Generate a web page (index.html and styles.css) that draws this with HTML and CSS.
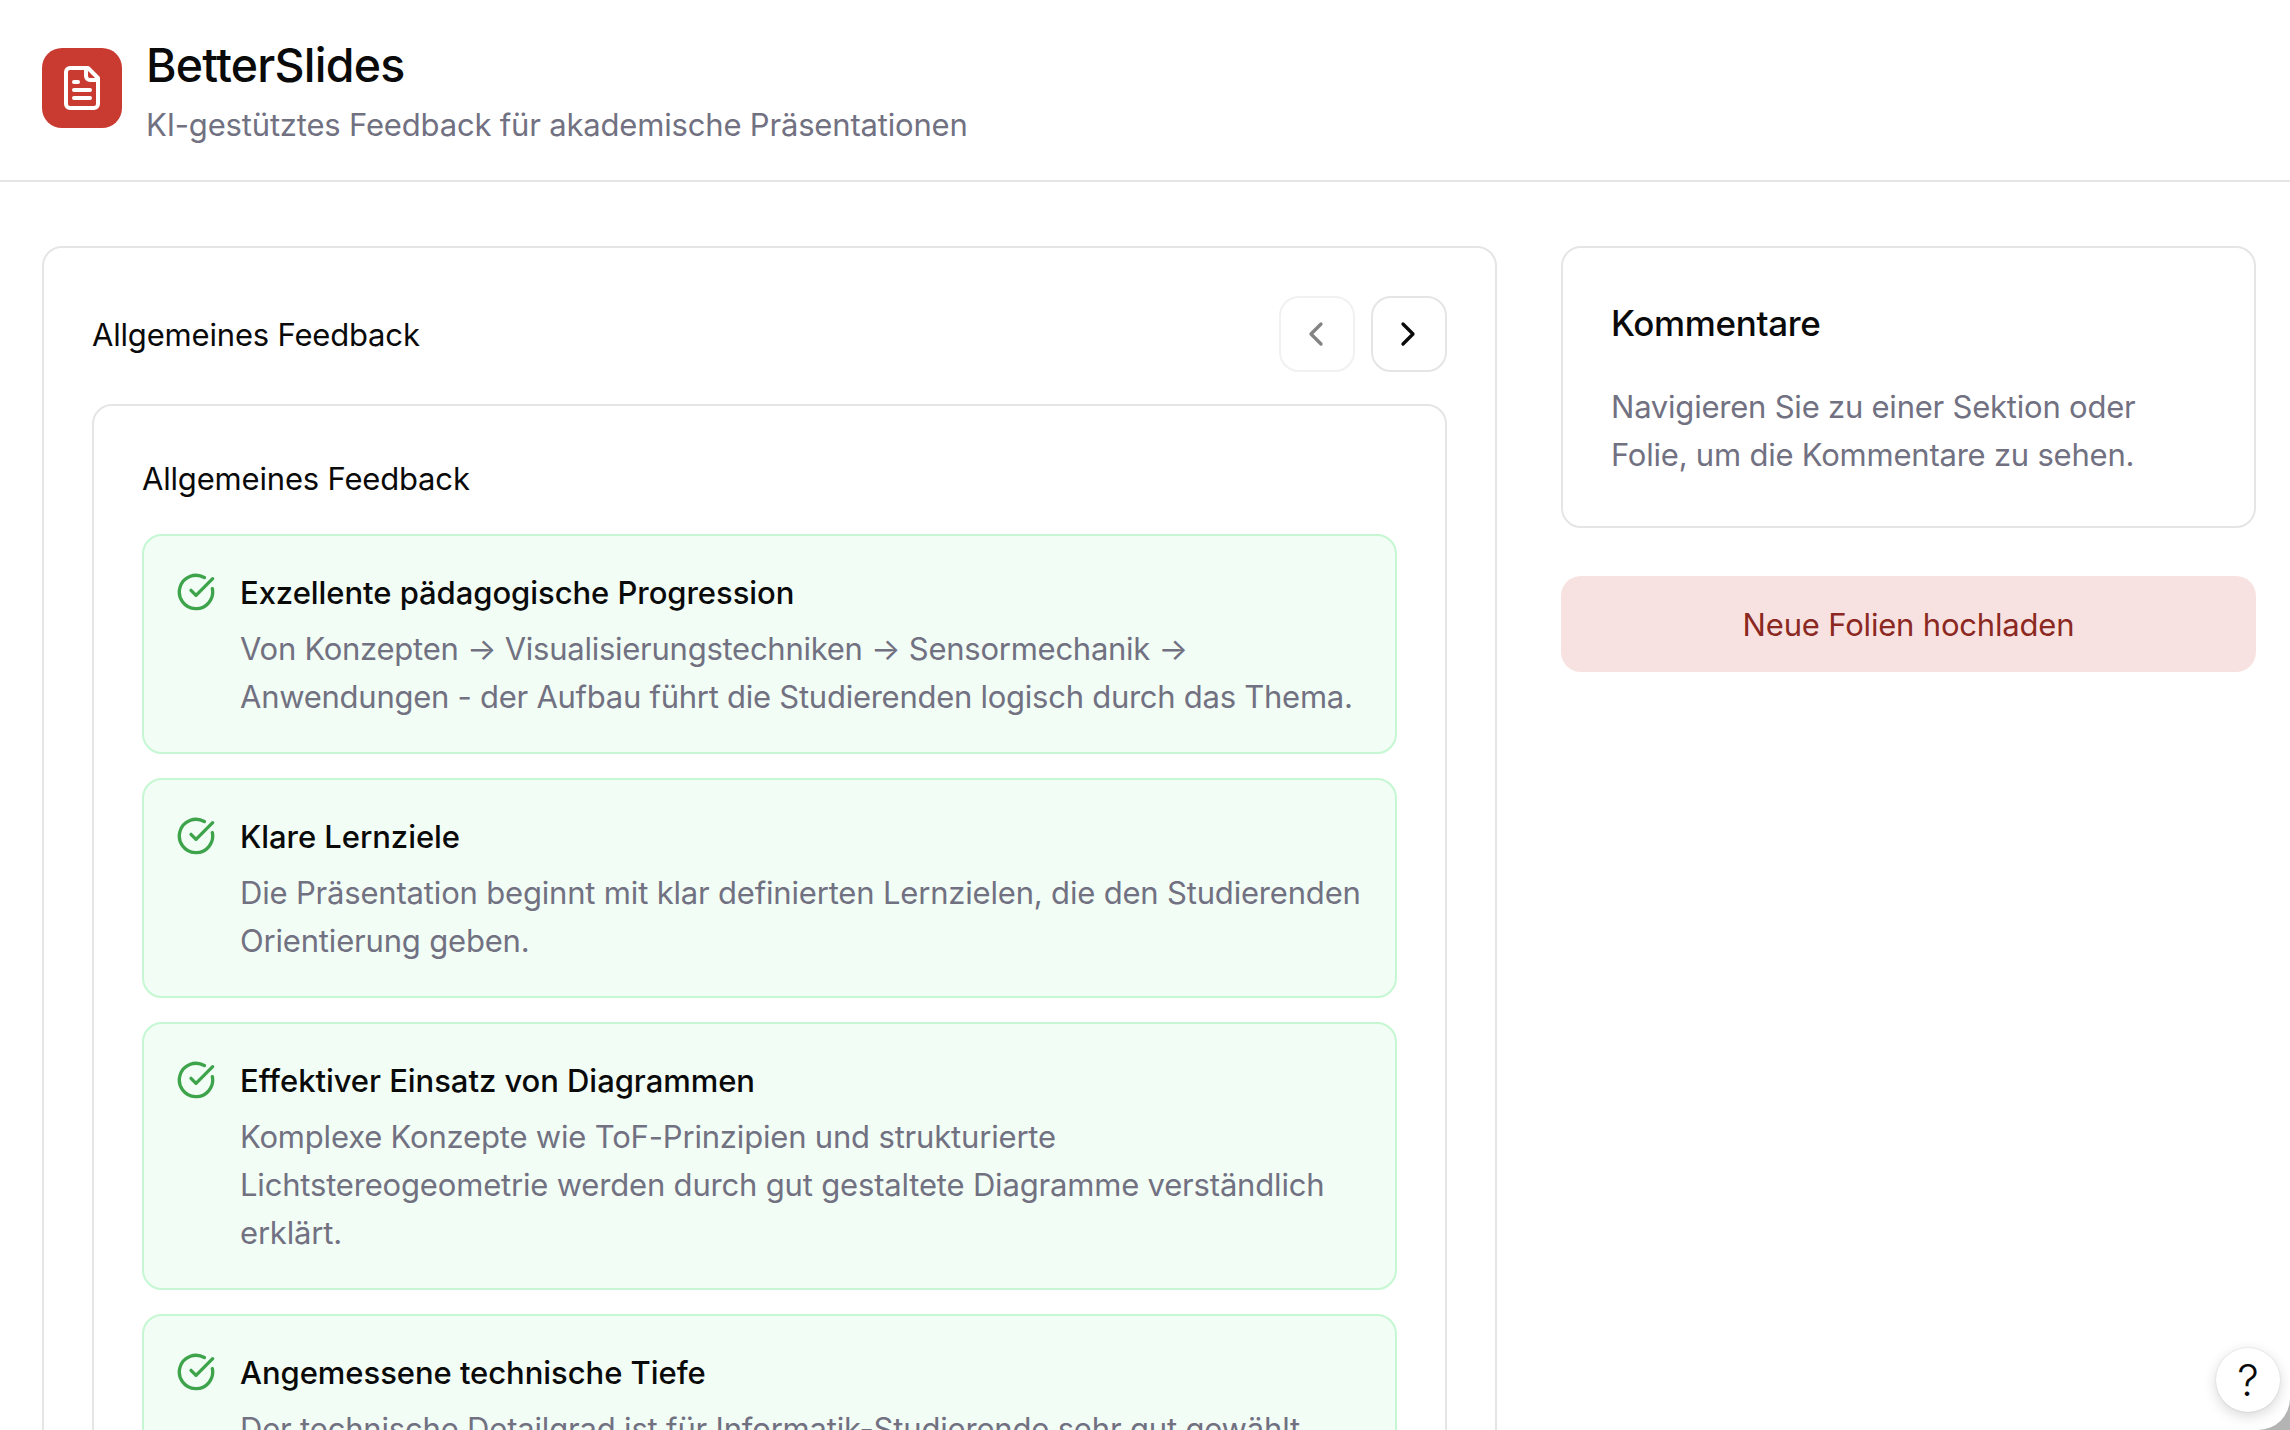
FILE: index.html
```
<!DOCTYPE html>
<html lang="de">
<head>
    <meta charset="UTF-8">
    <meta name="viewport" content="width=device-width, initial-scale=1.0">
    <title>BetterSlides</title>
    <link rel="stylesheet" href="styles.css">
</head>
<body>
    <div class="app">
        <header class="header">
            <div class="logo">
                <svg class="logo-icon" viewBox="0 0 24 24"><path d="M15 2H6a2 2 0 0 0-2 2v16a2 2 0 0 0 2 2h12a2 2 0 0 0 2-2V7Z"/><path d="M14 2v4a2 2 0 0 0 2 2h4"/><path d="M10 9H8"/><path d="M16 13H8"/><path d="M16 17H8"/></svg>
            </div>
            <div>
                <h1>BetterSlides</h1>
                <p class="subtitle">KI-gestütztes Feedback für akademische Präsentationen</p>
            </div>
        </header>

        <main class="main">
            <section class="card viewer">
                <div class="viewer-head">
                    <h2>Allgemeines Feedback</h2>
                    <div class="nav">
                        <button class="nav-btn" disabled><svg viewBox="0 0 24 24"><path d="m15 18-6-6 6-6"/></svg></button>
                        <button class="nav-btn"><svg viewBox="0 0 24 24"><path d="m9 18 6-6-6-6"/></svg></button>
                    </div>
                </div>

                <div class="card feedback">
                    <h2>Allgemeines Feedback</h2>
                    <div class="feedback-list">
                        <div class="item">
                            <svg class="check" viewBox="0 0 24 24"><path d="M21.801 10A10 10 0 1 1 17 3.335"/><path d="m9 11 3 3L22 4"/></svg>
                            <div>
                                <h3>Exzellente pädagogische Progression</h3>
                                <p class="tight">Von Konzepten → Visualisierungstechniken → Sensormechanik →<br>Anwendungen - der Aufbau führt die Studierenden logisch durch das Thema.</p>
                            </div>
                        </div>
                        <div class="item">
                            <svg class="check" viewBox="0 0 24 24"><path d="M21.801 10A10 10 0 1 1 17 3.335"/><path d="m9 11 3 3L22 4"/></svg>
                            <div>
                                <h3>Klare Lernziele</h3>
                                <p>Die Präsentation beginnt mit klar definierten Lernzielen, die den Studierenden<br>Orientierung geben.</p>
                            </div>
                        </div>
                        <div class="item">
                            <svg class="check" viewBox="0 0 24 24"><path d="M21.801 10A10 10 0 1 1 17 3.335"/><path d="m9 11 3 3L22 4"/></svg>
                            <div>
                                <h3>Effektiver Einsatz von Diagrammen</h3>
                                <p>Komplexe Konzepte wie ToF-Prinzipien und strukturierte<br>Lichtstereogeometrie werden durch gut gestaltete Diagramme verständlich<br>erklärt.</p>
                            </div>
                        </div>
                        <div class="item">
                            <svg class="check" viewBox="0 0 24 24"><path d="M21.801 10A10 10 0 1 1 17 3.335"/><path d="m9 11 3 3L22 4"/></svg>
                            <div>
                                <h3>Angemessene technische Tiefe</h3>
                                <p>Der technische Detailgrad ist für Informatik-Studierende sehr gut gewählt.</p>
                            </div>
                        </div>
                    </div>
                </div>
            </section>

            <aside class="sidebar">
                <div class="card comments">
                    <h2 class="comments-title">Kommentare</h2>
                    <p>Navigieren Sie zu einer Sektion oder<br>Folie, um die Kommentare zu sehen.</p>
                </div>
                <button class="upload">Neue Folien hochladen</button>
            </aside>
        </main>

        <button class="help">?</button>
    </div>
</body>
</html>
```
FILE: styles.css
```
* { box-sizing: border-box; margin: 0; padding: 0; }
html { background: #b4b4b4; }
body { font-family: Inter, "Liberation Sans", sans-serif; font-size: 31px; line-height: 48px; letter-spacing: -0.18px; color: #0a0a0a; overflow: hidden; }
h1, h2, h3 { font-size: 31px; line-height: 48px; font-weight: 400; }
h1, h2, h3, p { padding-top: 1px; margin-bottom: -1px; }
p { color: #717182; white-space: nowrap; }
button { font: inherit; letter-spacing: inherit; color: inherit; border: none; cursor: pointer; }
svg { fill: none; stroke: currentColor; stroke-width: 2; stroke-linecap: round; stroke-linejoin: round; flex-shrink: 0; }

.app { position: relative; height: 1430px; overflow: hidden; background: #fff; border-bottom-right-radius: 32px; }

.header { display: flex; align-items: center; gap: 24px; height: 182px; padding: 28px 42px 32px; border-bottom: 2px solid #e5e5e5; }
.header h1 { font-size: 46.5px; line-height: 72px; font-weight: 500; letter-spacing: -0.75px; }
.logo { display: flex; align-items: center; justify-content: center; width: 80px; height: 80px; border-radius: 20px; background: #c93a31; color: #fff; }
.logo-icon { width: 48px; height: 48px; }

.main { display: flex; align-items: flex-start; gap: 64px; padding: 64px 34px 0 42px; }
.card { border: 2px solid #e5e5e5; border-radius: 20px; padding: 48px; background: #fff; }
.viewer { width: 1455px; }
.viewer-head { display: flex; align-items: center; justify-content: space-between; margin-bottom: 32px; }
.nav { display: flex; gap: 16px; }
.nav-btn { display: flex; align-items: center; justify-content: center; width: 76px; height: 76px; padding-right: 2px; border: 2px solid #e5e5e5; border-radius: 20px; background: #fff; }
.nav-btn:disabled { opacity: 0.5; }
.nav-btn svg { width: 40px; height: 40px; }

.feedback-list { display: flex; flex-direction: column; gap: 24px; margin-top: 32px; }
.item { display: flex; align-items: flex-start; gap: 24px; padding: 32px; border: 2px solid #c5f7d2; border-radius: 20px; background: #f2fdf5; }
.item h3 { font-weight: 500; margin-bottom: 7px; letter-spacing: -0.05px; }
.item .tight { letter-spacing: -0.26px; }
.check { width: 40px; height: 40px; margin-top: 4px; color: #3ea44b; }

.sidebar { flex: 1; display: flex; flex-direction: column; gap: 48px; }
.comments p { letter-spacing: -0.22px; }
.comments-title { font-size: 35px; line-height: 54px; font-weight: 500; padding-top: 0; margin-bottom: 32px; letter-spacing: -0.35px; }
.upload { height: 96px; padding-top: 2px; border-radius: 20px; background: #f8e2e1; color: #8b2822; }

.help { position: absolute; right: 10px; bottom: 18px; width: 64px; height: 64px; border-radius: 50%; background: #fff; font-size: 43px; font-weight: 300; line-height: 64px; text-align: center; box-shadow: 0 4px 14px rgba(0, 0, 0, 0.16), 0 0 2px rgba(0, 0, 0, 0.14); }
```
